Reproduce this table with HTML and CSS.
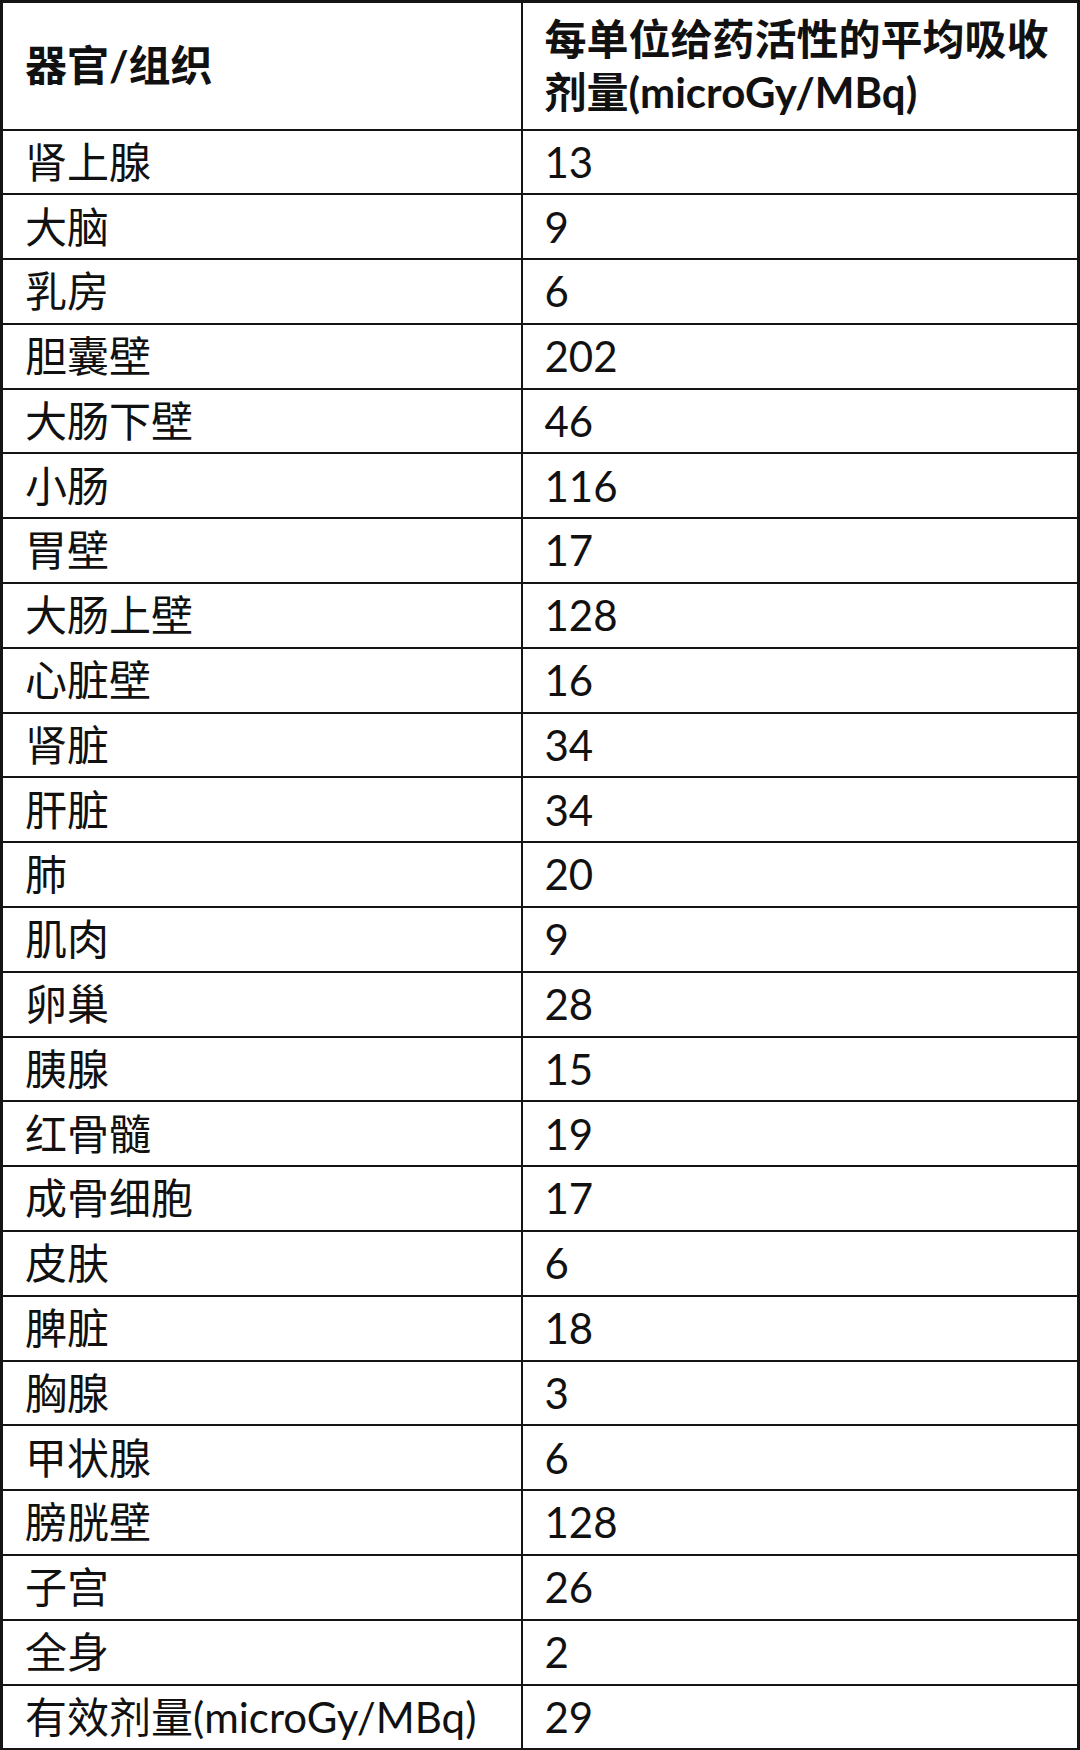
FILE: index.html
```html
<!DOCTYPE html>
<html lang="zh-CN">
<head>
<meta charset="utf-8">
<title>吸收剂量表</title>
<link rel="stylesheet" href="styles.css">
</head>
<body>
<table class="dose-table">
  <colgroup>
    <col class="col-organ">
    <col class="col-dose">
  </colgroup>
  <thead>
    <tr class="head-row">
      <th>器官/组织</th>
      <th>每单位给药活性的平均吸收剂量(microGy/MBq)</th>
    </tr>
  </thead>
  <tbody>
    <tr><td>肾上腺</td><td>13</td></tr>
    <tr><td>大脑</td><td>9</td></tr>
    <tr><td>乳房</td><td>6</td></tr>
    <tr><td>胆囊壁</td><td>202</td></tr>
    <tr><td>大肠下壁</td><td>46</td></tr>
    <tr><td>小肠</td><td>116</td></tr>
    <tr><td>胃壁</td><td>17</td></tr>
    <tr><td>大肠上壁</td><td>128</td></tr>
    <tr><td>心脏壁</td><td>16</td></tr>
    <tr><td>肾脏</td><td>34</td></tr>
    <tr><td>肝脏</td><td>34</td></tr>
    <tr><td>肺</td><td>20</td></tr>
    <tr><td>肌肉</td><td>9</td></tr>
    <tr><td>卵巢</td><td>28</td></tr>
    <tr><td>胰腺</td><td>15</td></tr>
    <tr><td>红骨髓</td><td>19</td></tr>
    <tr><td>成骨细胞</td><td>17</td></tr>
    <tr><td>皮肤</td><td>6</td></tr>
    <tr><td>脾脏</td><td>18</td></tr>
    <tr><td>胸腺</td><td>3</td></tr>
    <tr><td>甲状腺</td><td>6</td></tr>
    <tr><td>膀胱壁</td><td>128</td></tr>
    <tr><td>子宫</td><td>26</td></tr>
    <tr><td>全身</td><td>2</td></tr>
    <tr><td>有效剂量(microGy/MBq)</td><td>29</td></tr>
  </tbody>
</table>
</body>
</html>
```

FILE: styles.css
```css
html, body {
  margin: 0;
  padding: 0;
  background: #ffffff;
}

.dose-table {
  width: 1080px;
  height: 1750px;
  border-collapse: collapse;
  border: 3px solid #151515;
  font-family: Lato, "Noto Sans CJK SC", sans-serif;
  font-size: 42px;
  color: #111111;
  table-layout: fixed;
}

.col-organ {
  width: 520px;
}

.dose-table th,
.dose-table td {
  box-sizing: border-box;
  border: 2px solid #151515;
  text-align: left;
  vertical-align: middle;
  padding: 0 8px 0 22px;
  line-height: 1.2;
}

.head-row {
  height: 128px;
}

.head-row th {
  font-weight: 700;
  line-height: 53px;
}

.dose-table tbody tr {
  height: 64.8px;
}

.dose-table td {
  font-weight: 400;
}
```
